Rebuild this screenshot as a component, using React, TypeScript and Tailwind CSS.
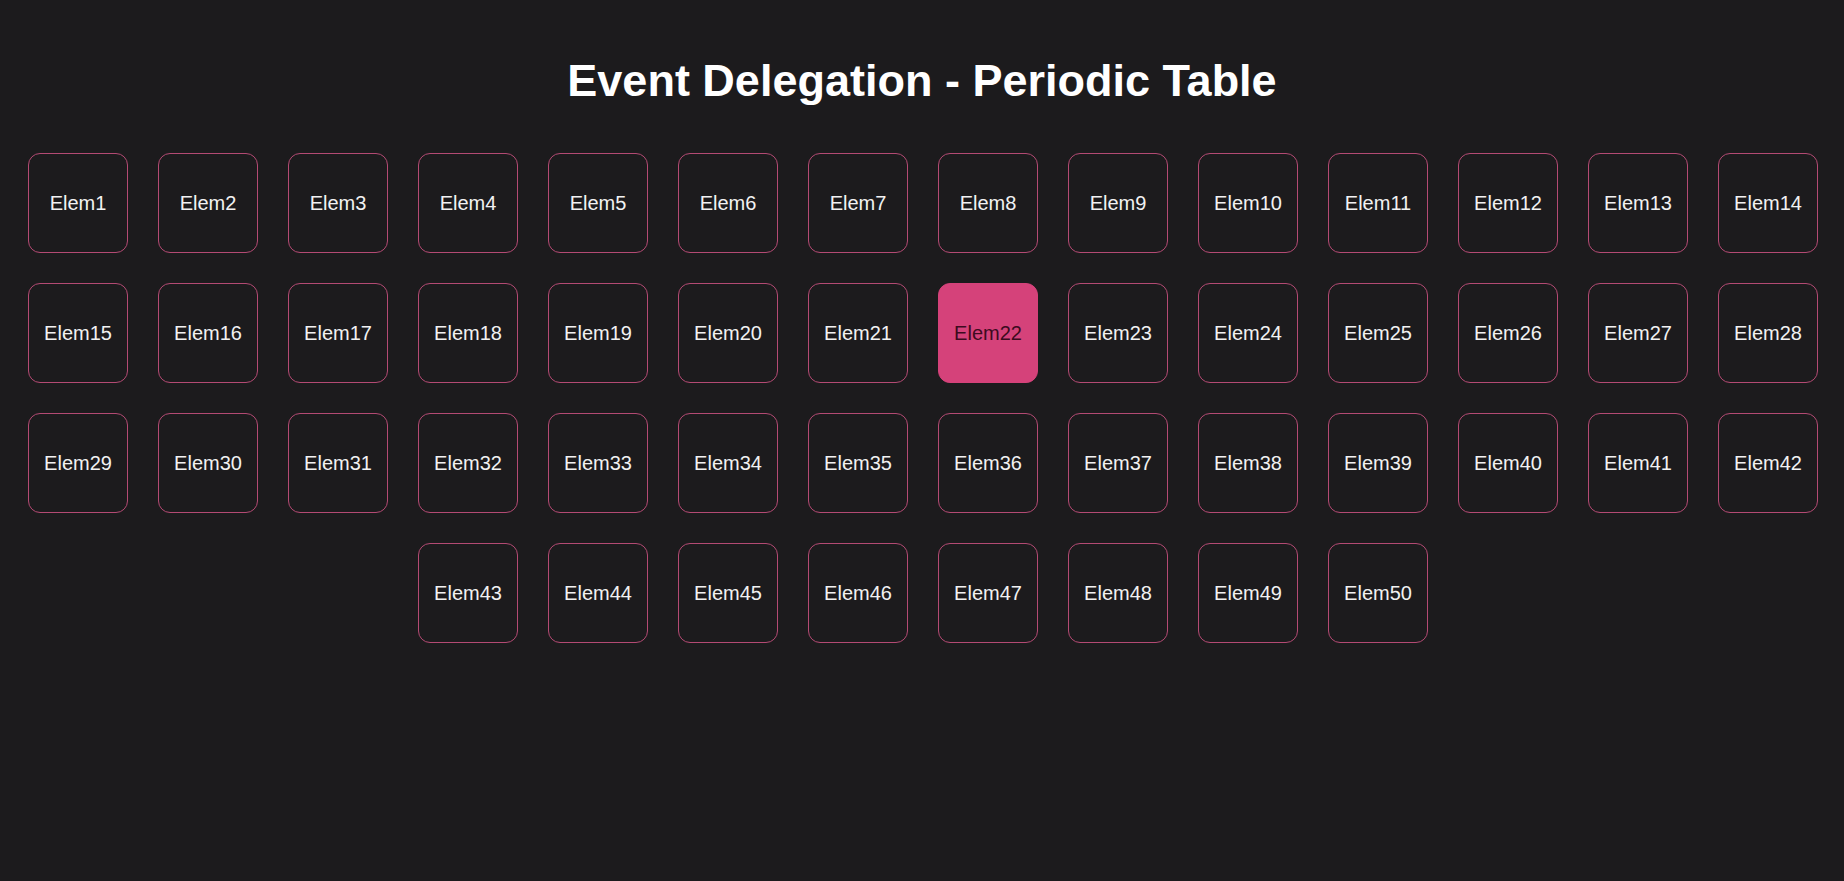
import { FunctionComponent, useState } from "react";

const elements = Array.from({ length: 50 }, (_, i) => `Elem${i + 1}`);

const App: FunctionComponent = () => {
  const [active, setActive] = useState<string>("Elem22");

  return (
    <div className="min-h-[881px] w-full bg-[#1c1b1d] text-[#f2f2f2] font-['Liberation_Sans',Arial,sans-serif] pt-[56px]">
      <h1 className="text-center text-[45px] leading-[50px] font-bold text-white">
        Event Delegation - Periodic Table
      </h1>
      <div
        className="flex flex-wrap justify-center pl-[2px] mt-[32px]"
        onClick={(e) => {
          const target = (e.target as HTMLElement).closest("[data-elem]");
          if (target) setActive(target.getAttribute("data-elem") || "");
        }}
      >
        {elements.map((name) => (
          <div
            key={name}
            data-elem={name}
            className={
              name === active
                ? "m-[15px] flex h-[100px] w-[100px] cursor-pointer items-center justify-center rounded-xl border border-[#d5427a] bg-[#d5427a] text-[20px] text-[#3d0b1f]"
                : "m-[15px] flex h-[100px] w-[100px] cursor-pointer items-center justify-center rounded-xl border border-[#b44a73] text-[20px] text-[#f2f2f2]"
            }
          >
            {name}
          </div>
        ))}
      </div>
    </div>
  );
};

export default App;
